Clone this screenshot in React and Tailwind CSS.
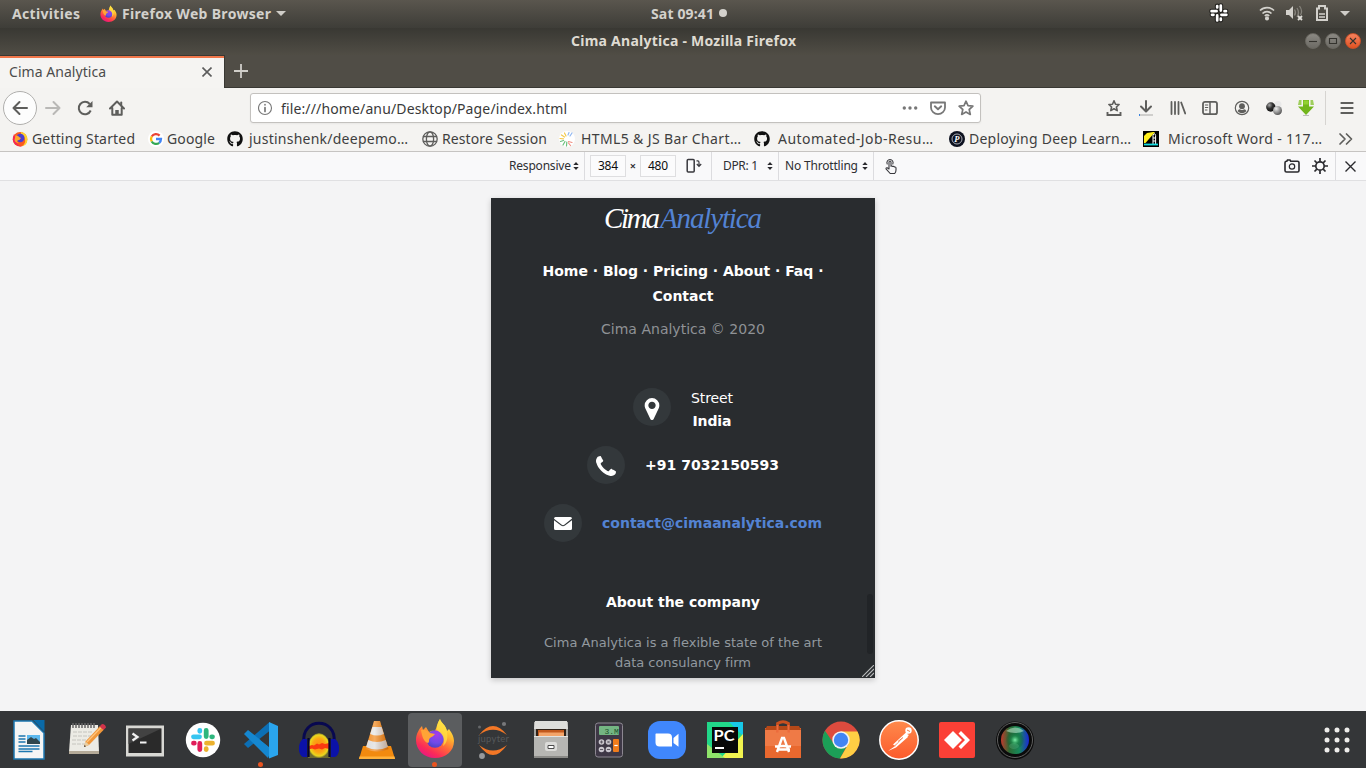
import { useLayoutEffect, useRef } from "react";
import { FaGithub } from "react-icons/fa";

/* Single line of text whose tracking is spread so it fills its box. */
function Fit({ className = "", children }) {
  const box = useRef(null);
  const run = useRef(null);
  useLayoutEffect(() => {
    const el = run.current;
    el.style.letterSpacing = "0px";
    const natural = el.getBoundingClientRect().width;
    const target = box.current.getBoundingClientRect().width;
    const n = Math.max(el.textContent.length - 1, 1);
    el.style.letterSpacing = (target - natural) / n + "px";
  }, [children]);
  return (
    <span ref={box} className={"block shrink-0 whitespace-nowrap " + className}>
      <span ref={run}>{children}</span>
    </span>
  );
}

function Firefox({ className, id }) {
  return (
    <svg className={className} viewBox="0 0 40 40">
      <defs>
        <linearGradient id={id + "a"} x1="0.8" y1="0.05" x2="0.25" y2="1">
          <stop offset="0" stopColor="#fff44f" />
          <stop offset="0.3" stopColor="#ffb82e" />
          <stop offset="0.55" stopColor="#ff6a38" />
          <stop offset="0.8" stopColor="#fb2b58" />
          <stop offset="1" stopColor="#e31587" />
        </linearGradient>
        <radialGradient id={id + "b"} cx="0.6" cy="0.25" r="0.8">
          <stop offset="0" stopColor="#a63bea" />
          <stop offset="0.6" stopColor="#6f4be8" />
          <stop offset="1" stopColor="#4b3fc0" />
        </radialGradient>
      </defs>
      <path fill={`url(#${id}a)`} d="M25 1c1 4 6 6 7 12l2-2c2 3 5 7 5 12 0 10-8 17-19 17C9 40 1 32 1 22 1 16 4 11 7 8l1 4 3-3 3 5c3-2 5-1 6-1 2-4 2-8 5-12z" />
      <circle cx="20" cy="21" r="8.8" fill={`url(#${id}b)`} />
      <path fill="#ffa436" d="M6 12c4-1 7 1 9 3l5 1c-1 2-4 3-5 4-2 2 0 4-2 5-4-1-6-6-7-13z" />
      <path fill="#ffdf43" opacity=".75" d="M25 1c1 4 6 6 7 13 1 6 0 11-4 14 2-6 1-11-5-15-2-2-1-7 2-12z" />
    </svg>
  );
}

/* Older, rounder globe-and-fox mark used by the bookmark. */
function FirefoxClassic() {
  return (
    <svg className="h-4 w-4" viewBox="0 0 16 16">
      <circle cx="8" cy="8.300" r="7.300" fill="#fb5a1e" />
      <path d="M1.300 5.500Q0 10 3 13q3 3 7 2.300-6-1-6-6.300L2 3z" fill="#f4245c" />
      <path d="M9 .8q7 1.700 6.400 8.700-.6 4.500-5.400 5.800 4-3 3-7-1-4-4-5z" fill="#ffd02e" />
      <circle cx="8.300" cy="7" r="4.200" fill="#4a3fd0" />
      <path d="M3.500 4.500q3-.5 3.500 1.500l2 1q-1 2-3.500 2.500-1.500 2 2 2-4 1.500-5-2.500z" fill="#ffa52c" />
    </svg>
  );
}

function Caret({ className = "" }) {
  return (
    <svg className={"h-[5px] w-[10px] " + className} viewBox="0 0 10 5">
      <path d="M0 0h10L5 5z" fill="#cfcdc8" />
    </svg>
  );
}

const SLACK_ARMS = [0, 90, 180, 270];

function TopPanel() {
  return (
    <div className="flex h-7 items-center bg-gradient-to-b from-[#5a564e] to-[#3e3d38] pl-3 text-[14px] leading-7 font-bold text-[#d3d1cc]">
      <Fit className="w-[68px]">Activities</Fit>
      <Firefox id="fp" className="-mt-0.5 ml-5 h-[17px] w-[17px]" />
      <Fit className="ml-[5px] w-[149px]">Firefox Web Browser</Fit>
      <Caret className="-mt-px ml-[5px]" />
      <Fit className="ml-[365px] w-[63px]">Sat 09:41</Fit>
      <span className="-mt-0.5 ml-[5px] h-2 w-2 rounded-full bg-[#d3d1cc]" />
      <svg className="-mt-0.5 ml-[482px] h-5 w-5" viewBox="0 0 20 20" fill="none" strokeLinecap="round">
        {[["#22211e", 4.8], ["#ffffff", 2.7]].map(([color, width]) => (
          <g key={color} stroke={color} strokeWidth={width}>
            {SLACK_ARMS.map((a) => (
              <path key={a} transform={`rotate(${a} 10 10)`} d="M2.600 8.200H7.600M8.200 3V4.500" />
            ))}
          </g>
        ))}
      </svg>
      <svg className="-mt-0.5 ml-[30px] h-4 w-4" viewBox="0 0 16 16" fill="none" stroke="#d3d1cc" strokeWidth="1.7">
        <path d="M1 5.500a10 10 0 0 1 14 0" />
        <path d="M3.500 8.500a6.400 6.400 0 0 1 9 0" />
        <path d="M5.800 11a3.200 3.200 0 0 1 4.400 0" />
        <circle cx="8" cy="13.400" r="1.200" fill="#d3d1cc" />
      </svg>
      <svg className="-mt-0.5 ml-[11px] h-4 w-[18px]" viewBox="0 0 18 16">
        <path d="M0 5h3l4-4v13l-4-4H0z" fill="#d3d1cc" />
        <path d="M8.500 4.500q2 3 0 6M11 3q3 4.500 0 9M13.500 1q3.500 5 1 9" fill="none" stroke="#85827b" strokeWidth="1.300" />
        <path d="M12 11l4 4M16 11l-4 4" stroke="#e0ded9" strokeWidth="1.800" />
      </svg>
      <svg className="-mt-0.5 ml-3 h-4 w-3" viewBox="0 0 12 16" fill="none" stroke="#d3d1cc">
        <path d="M1 3.500h2V1h6v2.500h2V15H1z" strokeWidth="2" />
        <path d="M3 9h6M3 12h6" strokeWidth="1.600" />
      </svg>
      <Caret className="-mt-px ml-3" />
    </div>
  );
}

function WindowButton({ close, children }) {
  return (
    <span className={"flex h-4 w-4 items-center justify-center rounded-full border " + (close ? "border-[#c8512a] bg-gradient-to-b from-[#f5815c] to-[#e0521f]" : "border-[#6a6861] bg-gradient-to-b from-[#8b8983] to-[#6c6a64]")}>
      <svg className="h-2.5 w-2.5 shrink-0" viewBox="0 0 10 10" fill="none" stroke="#34332e" strokeWidth="1.1">{children}</svg>
    </span>
  );
}

function TitleBar() {
  return (
    <div className="flex h-[27px] items-center bg-gradient-to-b from-[#393833] to-[#504d45] pb-0.5 pl-[571px]">
      <Fit className="w-[225px] text-[14px] leading-[24px] font-bold text-[#dfdbd2]">Cima Analytica - Mozilla Firefox</Fit>
      <div className="ml-[509px] flex gap-1">
        <WindowButton><path d="M1 5.500h8" /></WindowButton>
        <WindowButton><path d="M1.500 2.500h7v5h-7z" /></WindowButton>
        <WindowButton close><path d="M2 2l6 6M8 2L2 8" /></WindowButton>
      </div>
    </div>
  );
}

function TabStrip() {
  return (
    <div className="flex h-[33px] bg-[#504d46]">
      <div className="flex w-[225px] items-center border-t border-r border-[#393833] bg-[#f5f4f2]">
        <div className="flex h-full w-full items-center border-t-2 border-[#f0764a] pb-0.5 pl-[9px]">
          <Fit className="w-[97px] text-[14px] leading-[26px] text-[#4c4c4c]">Cima Analytica</Fit>
          <svg className="ml-24 h-2.5 w-2.5" viewBox="0 0 10 10" stroke="#5c5c5c" strokeWidth="1.6"><path d="M.5.5l9 9M9.500.5l-9 9" /></svg>
        </div>
      </div>
      <div className="flex flex-1 items-center border-b border-[#393833] pl-[9px]">
        <svg className="h-3.5 w-3.5" viewBox="0 0 14 14" stroke="#d0cec9" strokeWidth="1.8"><path d="M7 0v14M0 7h14" /></svg>
      </div>
    </div>
  );
}

function Ico({ className = "", children }) {
  return (
    <svg className={"h-4 w-4 shrink-0 " + className} viewBox="0 0 16 16" fill="none" stroke="#5e5e5c" strokeWidth="2" strokeLinecap="round" strokeLinejoin="round">
      {children}
    </svg>
  );
}

const STAR = "M8 1.200l2 4.500 4.900.5-3.700 3.300 1.100 4.900L8 11.900l-4.300 2.500 1.100-4.900L1.100 6.200l4.900-.5z";

function NavBar() {
  return (
    <div className="flex h-10 items-center pl-[3px]">
      <div className="flex h-[34px] w-[34px] items-center justify-center rounded-full border border-[#b0afad] bg-[#fdfdfd]">
        <Ico><path d="M15 8H1.500M7.500 2l-6 6 6 6" /></Ico>
      </div>
      <Ico className="ml-2"><path stroke="#b9b8b6" d="M1 8h13.500M8.500 2l6 6-6 6" /></Ico>
      <Ico className="ml-4"><path d="M13.700 10.500a6.200 6.200 0 1 1-1-6.500" strokeLinecap="butt" /><path d="M15.500 1V7.300H9.200z" fill="#5e5e5c" stroke="none" /></Ico>
      <Ico className="ml-4"><path d="M1 8.500l7-7 7 7M3.300 8v6.700h9.400V8" /><path d="M12.200 2.500v3" /><path d="M8 14v-4" strokeWidth="3.500" strokeLinecap="butt" /></Ico>
      <div className="ml-[125px] flex h-[30px] w-[731px] items-center rounded-[3px] border border-[#c3c1be] bg-white pl-[7px] shadow-xs">
        <Ico><circle cx="7" cy="8" r="6.500" strokeWidth="1.1" stroke="#777" /><path d="M7 7.500v4M7 4.700v.1" strokeWidth="1.700" stroke="#777" /></Ico>
        <Fit className="mt-0.5 ml-[7px] w-[286px] text-[14px] leading-[26px] text-[#3a3a3a]">file:///home/anu/Desktop/Page/index.html</Fit>
        <div className="ml-[335px] flex gap-3">
          <Ico><path d="M2.300 8v.01M8 8v.01M13.700 8v.01" strokeWidth="3.400" stroke="#777" /></Ico>
          <Ico><path d="M1 2.500h14v5a7 6.600 0 0 1-14 0z" stroke="#777" strokeWidth="1.800" /><path d="M4.800 6.300L8 9.300l3.200-3" stroke="#777" strokeWidth="1.900" /></Ico>
          <Ico><path d={STAR} stroke="#777" strokeWidth="1.700" /></Ico>
        </div>
      </div>
      <div className="ml-[125px] flex gap-4">
        <Ico><path d="M8 .8l1.500 3.400 3.600.3-2.700 2.500.8 3.600L8 8.700l-3.200 1.900.8-3.600L2.900 4.500l3.600-.3z" strokeWidth="1.600" /><path d="M1.500 12v3h13v-3" strokeWidth="1.900" strokeLinecap="butt" strokeLinejoin="miter" /></Ico>
        <Ico><path d="M8 1v10M3 6.500l5 5 5-5" /><path d="M1 15h14" stroke="#cfcecc" strokeLinecap="butt" /><path d="M1 15h1" stroke="#3b83dd" strokeLinecap="butt" /></Ico>
        <Ico><path d="M1.500 2v12M5 2v12M8.500 2v12M11.200 2.500l4 11" strokeWidth="1.800" /></Ico>
        <Ico><rect x="1" y="1.800" width="14" height="12.400" rx="2" strokeWidth="1.800" /><path d="M8 2v12" strokeWidth="1.500" /><path d="M3.300 5h2.500M3.300 7.500h2.500M3.300 10H5" strokeWidth="1" /></Ico>
        <Ico><circle cx="8" cy="8" r="6.700" strokeWidth="1.200" /><circle cx="8" cy="6.200" r="2.900" fill="#5e5e5c" stroke="none" /><path d="M3.600 11.300q.6-1.800 2.200-2 2.200 1.300 4.400 0 1.600.2 2.200 2-4.400 4-8.800 0z" fill="#5e5e5c" stroke="none" /></Ico>
        <svg className="h-4 w-4" viewBox="0 0 16 16">
          <defs>
            <radialGradient id="b1" cx=".35" cy=".3" r=".7"><stop offset="0" stopColor="#aaa" /><stop offset=".5" stopColor="#333" /><stop offset="1" stopColor="#111" /></radialGradient>
            <radialGradient id="b2" cx=".35" cy=".3" r=".8"><stop offset="0" stopColor="#eee" /><stop offset=".6" stopColor="#888" /><stop offset="1" stopColor="#444" /></radialGradient>
          </defs>
          <circle cx="12" cy="4.500" r="3.500" fill="#e9e9e9" />
          <circle cx="4.800" cy="7" r="4.700" fill="url(#b1)" />
          <circle cx="11.500" cy="10.500" r="4.500" fill="url(#b2)" />
        </svg>
        <svg className="h-4 w-4" viewBox="0 0 16 16">
          <path d="M5 0h6v6.500h5L8 15 0 6.500h5z" fill="#72b51b" />
          <path d="M1 0h2.500v5H0zM12.500 0H15l1 5h-3.500z" fill="#9fce5c" />
          <path d="M5.500.5h5v4h-5z" fill="#93d132" />
          <path d="M5 15.500h6" stroke="#bbb" />
        </svg>
      </div>
      <span className="ml-[11px] h-[34px] w-px bg-[#d6d4d1]" />
      <Ico className="ml-[13px]"><path d="M2.500 3h11M2.500 8h11M2.500 13h11" strokeLinecap="square" strokeWidth="1.800" /></Ico>
    </div>
  );
}

function Bookmark({ className, text, gap, icon, children }) {
  return (
    <div className={"flex shrink-0 items-center " + className}>
      <span className="flex h-4 w-4 shrink-0 items-center justify-center">{icon}</span>
      <Fit className={gap + " " + text}>{children}</Fit>
    </div>
  );
}

function GoogleIcon() {
  return (
    <svg className="h-4 w-4" viewBox="0 0 16 16" fill="none" strokeWidth="2.300">
      <circle cx="8" cy="8" r="8" fill="#fff" />
      <path d="M11.600 4.600A5 5 0 0 0 3.700 5.500" stroke="#ea4335" />
      <path d="M3.700 5.500a5 5 0 0 0 0 5" stroke="#fbbc05" />
      <path d="M3.700 10.500a5 5 0 0 0 7.500 1.300" stroke="#34a853" />
      <path d="M11.200 11.800A5 5 0 0 0 13 8H8" stroke="#4285f4" />
    </svg>
  );
}

function Bookmarks() {
  return (
    <div className="flex h-[23px] items-center pb-px pl-3 text-[14px] leading-[22px] text-[#3f3f3f]">
      <Bookmark className="w-[136px]" gap="ml-1" text="w-[103px]" icon={<FirefoxClassic />}>Getting Started</Bookmark>
      <Bookmark className="w-[79px]" gap="ml-[3px]" text="w-[48px]" icon={<GoogleIcon />}>Google</Bookmark>
      <Bookmark className="w-[195px]" gap="ml-1.5" text="w-[159px]" icon={<FaGithub className="h-4 w-4 text-[#111]" />}>justinshenk/deepemo…</Bookmark>
      <Bookmark className="w-[137px]" gap="ml-1" text="w-[105px]" icon={<Ico><g strokeWidth="1.300"><circle cx="8" cy="8" r="7.200" /><ellipse cx="8" cy="8" rx="3.600" ry="7.200" /><path d="M1.500 5.500h13M1.500 10.500h13" /></g></Ico>}>Restore Session</Bookmark>
      <Bookmark
        className="w-[195px]" gap="ml-1.5" text="w-[160px]"
        icon={
          <svg className="h-4 w-4" viewBox="0 0 16 16" fill="none" strokeWidth="1.200" strokeLinecap="round">
            <circle cx="8" cy="8" r="8" fill="#fff" />
            <path d="M1 7.500l3.500.3M2.500 4L5.500 6M5.500 2L7 5" stroke="#f3c94b" />
            <path d="M9 4l1-2.500M11 5l2-3" stroke="#8fb7f2" />
            <path d="M1.500 10.500L4.500 9.500M4 14l2-3.500M7.500 15l.3-4" stroke="#6cc07e" />
            <path d="M9.500 10.500l3.500 1M9.500 12l2 2.500" stroke="#f09184" />
          </svg>
        }
      >
        HTML5 &amp; JS Bar Chart…
      </Bookmark>
      <Bookmark className="w-[195px]" gap="ml-2" text="w-[155px]" icon={<FaGithub className="h-4 w-4 text-[#111]" />}>Automated-Job-Resu…</Bookmark>
      <Bookmark
        className="w-[194px]" gap="ml-1" text="w-[162px]"
        icon={
          <svg className="h-4 w-4" viewBox="0 0 16 16">
            <circle cx="8" cy="8" r="8" fill="#0d1220" />
            <circle cx="8" cy="8" r="5" fill="none" stroke="#b9bcc5" strokeWidth=".9" />
            <text x="5.300" y="11" fill="#fff" fontSize="8.500" fontWeight="700" fontStyle="italic" fontFamily="Liberation Serif, serif">P</text>
          </svg>
        }
      >
        Deploying Deep Learn…
      </Bookmark>
      <Bookmark
        className="w-[195px]" gap="ml-[9px]" text="w-[154px]"
        icon={
          <svg className="h-4 w-4" viewBox="0 0 16 16">
            <path d="M0 0h16v16H0z" fill="#000" />
            <path d="M1 12V5l3-3 6-1h2L2.500 12z" fill="#ffef1c" />
            <path d="M10 13V4.500q1.300-4 2.600 0V13M10 7h2.600M10 10h2.600" fill="none" stroke="#fff" />
            <path d="M1 13.500h14" stroke="#16dfe4" strokeWidth="1.800" />
          </svg>
        }
      >
        Microsoft Word - 117…
      </Bookmark>
      <Ico><path d="M2 3l5 5-5 5M8.500 3l5 5-5 5" strokeWidth="1.700" /></Ico>
    </div>
  );
}

function Sort({ className = "" }) {
  return (
    <svg className={"h-2 w-1.5 shrink-0 " + className} viewBox="0 0 6 8"><path d="M3 0l2.700 3H.3zM3 8l2.700-3H.3z" fill="#2a2a2e" /></svg>
  );
}

function Sep({ className = "" }) {
  return <span className={"h-full w-px shrink-0 bg-[#dcdcdf] " + className} />;
}

function DesignToolbar() {
  return (
    <div className="flex h-[30px] items-center border-t border-b border-t-[#c6c4c2] border-b-[#e0e0e2] bg-[#f9f9fa] pl-[509px] text-[12px] leading-[28px] text-[#2f2f33]">
      <Fit className="w-[62px]">Responsive</Fit>
      <Sort className="ml-0.5" />
      <Sep className="ml-[5px]" />
      <span className="ml-[5px] flex h-[22px] w-9 items-center justify-center border border-[#dedee0] bg-[#fbfbfc] text-[#0c0c0d]"><Fit className="w-5">384</Fit></span>
      <span className="w-3.5 text-center text-[11px] font-semibold">×</span>
      <span className="flex h-[22px] w-9 items-center justify-center border border-[#dedee0] bg-[#fbfbfc] text-[#0c0c0d]"><Fit className="w-5">480</Fit></span>
      <svg className="ml-2.5 h-4 w-4" viewBox="0 0 16 16" fill="none" stroke="#38383d" strokeWidth="1.500">
        <rect x="1.200" y="1.500" width="7" height="12.500" rx="1" />
        <path d="M10.500 2.800h1.300q1.200 0 1.200 1.500V8M10.800 6l2.200 2.300L15.200 6" strokeWidth="1.200" />
      </svg>
      <Sep className="ml-[9px]" />
      <Fit className="ml-[11px] w-[35px]">DPR: 1</Fit>
      <Sort className="ml-[9px]" />
      <Sep className="ml-[5px]" />
      <Fit className="ml-1.5 w-[73px]">No Throttling</Fit>
      <Sort className="ml-1" />
      <Sep className="ml-[5px]" />
      <svg className="ml-2.5 h-4 w-4" viewBox="0 0 16 16" fill="none" stroke="#38383d" strokeWidth="1.100" strokeLinejoin="round" strokeLinecap="round">
        <path d="M5 11V4.200q0-1.200 1-1.200t1 1.200V8.300q1-.6 1.800.2 1.200-.5 1.700.5 1.400-.3 1.500 1V12q0 2-1.300 3.500H6.200L2 10.800q0-1.200 1.200-1z" />
        <path d="M3.200 6A3.100 3.100 0 1 1 8.800 6" />
      </svg>
      <svg className="ml-96 h-4 w-4 shrink-0" viewBox="0 0 16 16" fill="none" stroke="#2a2a2e" strokeWidth="1.600">
        <path d="M2.500 3.200h.3l.7-1.200h2.500l.7 1.200h6.800q1.500 0 1.500 1.500v7.800q0 1.500-1.500 1.500h-11Q1 14 1 12.500V4.700q0-1.500 1.500-1.500z" />
        <circle cx="8" cy="8.500" r="2.700" strokeWidth="1.200" />
      </svg>
      <svg className="ml-3 h-4 w-4 shrink-0" viewBox="0 0 16 16" fill="none" stroke="#2a2a2e" strokeWidth="2">
        <circle cx="8" cy="8" r="4.200" strokeWidth="1.700" />
        <path d="M8 0v3.500M8 12.500V16M0 8h3.500M12.500 8H16M2.500 2.500l2.300 2.300M11.200 11.200l2.300 2.300M13.500 2.500l-2.300 2.300M4.800 11.200l-2.300 2.300" strokeWidth="1.700" />
      </svg>
      <Sep className="ml-[7px]" />
      <svg className="ml-[9px] h-[11px] w-[11px] shrink-0" viewBox="0 0 11 11" stroke="#2a2a2e" strokeWidth="1.400"><path d="M.5.5l10 10M10.500.5l-10 10" /></svg>
    </div>
  );
}

function Badge({ children }) {
  return <span className="flex h-[38px] w-[38px] shrink-0 items-center justify-center rounded-full bg-[#33383b]">{children}</span>;
}

function DevicePage() {
  return (
    <div className="relative flex h-[480px] w-[384px] flex-col overflow-hidden bg-[#292c2f] font-['DejaVu_Sans',sans-serif] text-[14px] text-white shadow-[0_2px_6px_rgba(0,0,0,0.2)]">
      <div className="ml-[113px] flex h-10 font-['Liberation_Serif',serif] text-[29px] leading-[40px] italic">
        <Fit className="w-14">Cima</Fit>
        <Fit className="w-[102px] text-[#5383d3]">Analytica</Fit>
      </div>
      <div className="mt-[21px] flex flex-col items-center leading-[25px] font-bold">
        <Fit className="w-[281px]">Home · Blog · Pricing · About · Faq ·</Fit>
        <Fit className="w-[61px]">Contact</Fit>
      </div>
      <Fit className="mx-auto -mt-px w-[164px] leading-[42px] text-[#8f9296]">Cima Analytica © 2020</Fit>
      <div className="mt-[38px] flex flex-col gap-5">
        <div className="flex h-[38px] items-start pl-[142px]">
          <Badge><svg className="mt-1 h-[22px] w-4" viewBox="0 0 1024 1536" fill="#fff"><path d="M768 512q0-106-75-181t-181-75-181 75-75 181 75 181 181 75 181-75 75-181zm256 0q0 109-33 179l-364 774q-16 33-47.500 52t-67.500 19-67.500-19-46.500-52l-365-774q-33-70-33-179 0-212 150-362t362-150 362 150 150 362z" /></svg></Badge>
          <div className="-mt-px ml-5 flex flex-col items-center leading-[23px]">
            <Fit className="w-[42px]">Street</Fit>
            <Fit className="w-[39px] font-bold">India</Fit>
          </div>
        </div>
        <div className="flex h-[38px] items-center pl-24">
          <Badge><svg className="mt-0.5 h-5 w-5" viewBox="0 0 1408 1408" fill="#fff"><path d="M1408 1112q0 27-10 70.500t-21 68.500q-21 50-122 106-94 51-186 51-27 0-53-3.500t-57.500-12.500-47-14.500-55.500-20.500-49-18q-98-35-175-83-127-79-264-216t-216-264q-48-77-83-175-3-9-18-49t-20.500-55.500-14.500-47-12.500-57.500-3.500-53q0-92 51-186 56-101 106-122 25-11 68.500-21t70.500-10q14 0 21 3 18 6 53 76 11 19 30 54t35 63.500 31 53.500q3 4 17.500 25t21.500 35.500 7 28.500q0 20-28.500 50t-62 55-62 53-28.500 46q0 9 5 22.500t8.500 20.500 14 24 11.500 19q76 137 174 235t235 174q2 1 19 11.500t24 14 20.500 8.500 22.500 5q18 0 46-28.500t53-62 55-62 50-28.500q14 0 28.500 7t35.500 21.500 25 17.500q25 15 53.500 31t63.500 35 54 30q70 35 76 53 3 7 3 21z" /></svg></Badge>
          <Fit className="ml-5 w-[134px] font-bold">+91 7032150593</Fit>
        </div>
        <div className="flex h-[38px] items-center pl-[53px]">
          <Badge><svg className="h-[13px] w-[18px]" viewBox="0 0 18 13" fill="#fff"><path d="M1.500 0h15Q18 0 18 1.500L10.500 7.600Q9 8.700 7.500 7.600L0 1.700Q0 0 1.500 0zM0 3.200l7 5.400q2 1.400 4 0l7-5.400v8.300q0 1.500-1.500 1.500h-15Q0 13 0 11.500z" /></svg></Badge>
          <Fit className="ml-5 w-[220px] font-bold text-[#5383d3]">contact@cimaanalytica.com</Fit>
        </div>
      </div>
      <Fit className="mx-auto mt-[50px] w-[154px] leading-5 font-bold">About the company</Fit>
      <div className="mt-[21px] flex flex-col items-center text-[13px] leading-5 text-[#92999f]">
        <Fit className="w-[278px]">Cima Analytica is a flexible state of the art</Fit>
        <Fit className="w-[136px]">data consulancy firm</Fit>
      </div>
      <span className="absolute top-[396px] right-[2px] h-[60px] w-1.5 rounded-full bg-[#212427]" />
      <svg className="absolute right-px bottom-px h-3 w-3" viewBox="0 0 12 12" stroke="#b9babb" strokeWidth="1.100"><path d="M0 12L12 0M4 12l8-8M8 12l4-4" /></svg>
    </div>
  );
}

const dockIcons = {
  writer: (
    <>
      <path d="M5 1h18l12 12v26H5z" fill="#f5f5f5" stroke="#1c77b0" strokeWidth="1.500" />
      <path d="M24 0h11.500v12z" fill="#0a6aa8" />
      <path d="M18 15h13v9H18z" fill="#5cb8ee" />
      <path d="M18 24v-4l4-3 3 2 2-1 4 4v2z" fill="#30474f" />
      <path d="M9.500 16h7M9.500 19h7M9.500 22h7M9.500 26h21M9.500 29h21M9.500 31.500h14" stroke="#1c77b0" strokeWidth="1.300" />
    </>
  ),
  notes: (
    <>
      <path d="M4 5h27l1 27H2z" fill="#ecebe5" />
      <path d="M2 31h30v3H2z" fill="#b4aa98" />
      <path d="M6 3v5M9 3v5M12 3v5M15 3v5M18 3v5M21 3v5M24 3v5M27 3v5" stroke="#666" strokeWidth="1.500" />
      <path d="M6 12h20M6 16h18M5 20h16M5 24h14" stroke="#c5c4be" strokeDasharray="4 1" />
      <path d="M17 27l1.500-5.500L33 6l4 3.500-15 15.500z" fill="#f0973a" />
      <path d="M20 22L34 7.500" stroke="#ffc47c" strokeWidth="1.200" />
      <path d="M32.500 6.500l2.500-2.500q3.500 0 4 3.500l-2.500 2.500z" fill="#d2334a" />
      <path d="M17 27l1.500-5.500 3.500 3.300z" fill="#e9cfa4" />
      <path d="M17 27l.6-2 1.400 1.200z" fill="#2b2b2b" />
    </>
  ),
  terminal: (
    <>
      <path d="M1 5.500h38v31H1z" fill="#d8d8d4" />
      <path d="M3.500 8.500h33v24.500h-33z" fill="#2a2a2a" />
      <path d="M3.500 8.500h33L3.500 24z" fill="#424242" />
      <path d="M7.500 13.500l5 3.500-5 3.500M15 22.500h6.500" fill="none" stroke="#f3f3f3" strokeWidth="2.200" />
    </>
  ),
  slack: (
    <>
      <circle cx="20" cy="20" r="17.200" fill="#fff" />
      <g fill="none" strokeWidth="4.800" strokeLinecap="round">
        <path d="M10.500 16.800h6M16.800 10.500v.8" stroke="#36c5f0" />
        <path d="M23.200 10.500v6M29.500 16.800h-.8" stroke="#2eb67d" />
        <path d="M23.500 23.200h6M23.200 29.500v-.8" stroke="#ecb22e" />
        <path d="M16.800 23.500v6M10.500 23.200h.8" stroke="#e01e5a" />
      </g>
    </>
  ),
  vscode: (
    <>
      <path d="M28 2.500L3 24l4 4 24-19z" fill="#0c6fb5" />
      <path d="M3 14l4-4 24 19-4 9z" fill="#1587d0" />
      <path d="M28 2l9 4v29l-9 3.500z" fill="#2aa5ee" />
      <path d="M28 13v14l-8.500-7z" fill="#343638" />
    </>
  ),
  audacity: (
    <>
      <defs>
        <radialGradient id="au"><stop offset="0" stopColor="#ff8a12" /><stop offset=".55" stopColor="#fba514" /><stop offset=".85" stopColor="#ead81e" /><stop offset="1" stopColor="#d8cf20" stopOpacity=".35" /></radialGradient>
      </defs>
      <path d="M9 38V24q3-10 11-11 8 1 11 11v14z" fill="url(#au)" />
      <path d="M10 26l3-1 2 .5 3-2 2 1 3-1.500 3 1 4-1v6l-4-1-3 1.500-3-1-4 1-3-1-3 1z" fill="#fb3a10" />
      <path d="M5 22C2-3 38-3 35 22" fill="none" stroke="#08084f" strokeWidth="3" />
      <path d="M8 19v18H4C-2 34-1 22 4 19zM32 19v18h4c6-3 5-15 0-18z" fill="#0b12a8" />
      <path d="M9.500 18v19M30.500 18v19" stroke="#05052e" strokeWidth="2.200" />
    </>
  ),
  vlc: (
    <>
      <defs><linearGradient id="vl"><stop offset="0" stopColor="#fff" stopOpacity=".1" /><stop offset=".4" stopColor="#fff" stopOpacity=".35" /><stop offset="1" stopColor="#7a3400" stopOpacity=".3" /></linearGradient></defs>
      <path d="M6 26h28l4 13H2z" fill="#f28a0f" />
      <path d="M2.500 36.500h35l.5 2.500H2z" fill="#ffb13b" />
      <path d="M17 1h6l8.500 28q-11.500 5-23 0z" fill="#f07f0a" />
      <path d="M15.400 7h9.200l2.200 7q-6.800 3-13.600 0z" fill="#e2e2e2" />
      <path d="M11.300 20q8.700 4 17.400 0l2.200 7q-10.900 5-21.800 0z" fill="#dadada" />
      <path d="M17 1h6l8.500 28q-11.500 5-23 0z" fill="url(#vl)" />
    </>
  ),
  jupyter: (
    <>
      <path d="M6 15Q20-3 34 15 20 4.500 6 15zM6 25q14 20 28 0-14 11-28 0z" fill="#f37726" />
      <circle cx="31" cy="4" r="2.100" fill="#77787a" />
      <circle cx="6.500" cy="7" r="1.500" fill="#656769" />
      <circle cx="9" cy="36" r="2.900" fill="#98999b" />
      <text x="5" y="22" textLength="31" fill="#55585b" fontSize="9.500" fontFamily="Lato, sans-serif">jupyter</text>
    </>
  ),
  files: (
    <>
      <path d="M3 2h34v36H3z" fill="#a5a5a2" />
      <path d="M4 1h32l1 8H3z" fill="#dededb" />
      <path d="M5 9h30v8H5z" fill="#302218" />
      <path d="M7 10h26v7H7z" fill="#c2591d" /><path d="M8 12.500h25v4H8z" fill="#f4a56a" />
      <path d="M3 16h34v22H3z" fill="#b6b6b3" />
      <path d="M3 16h34v1H3z" fill="#e4e4e1" />
      <path d="M3 36h34v2H3z" fill="#8a8a87" />
      <rect x="14" y="22" width="12" height="9" rx="2" fill="#dcdcda" />
      <path d="M17 25.500h6v3h-6z" fill="#fff" stroke="#4c4c4c" />
    </>
  ),
  calculator: (
    <>
      <rect x="6.500" y="3" width="27" height="34" rx="2.500" fill="#3e3846" stroke="#8c8791" strokeWidth="1" />
      <rect x="10" y="6" width="20" height="9" rx="1" fill="#74b583" />
      <text x="15.500" y="13.500" fill="#23552f" fontSize="8" fontFamily="Liberation Mono, monospace">3.M</text>
      <g fill="#c9c6cd"><circle cx="12.500" cy="22" r="2.800" /><circle cx="19.500" cy="22" r="2.800" /><circle cx="12.500" cy="29.500" r="2.800" /><circle cx="19.500" cy="29.500" r="2.800" /></g>
      <path d="M11 22h3M12.500 20.500v3M18.300 20.800l2.400 2.400M20.700 20.800l-2.400 2.400M11 29.500h3M18 29.500h3" stroke="#55505c" strokeWidth=".9" />
      <rect x="24" y="19" width="6" height="13" rx="1" fill="#f07c1c" /><path d="M25.300 25.500h3.400" stroke="#fff" strokeWidth="1.200" />
    </>
  ),
  zoom: (
    <>
      <rect x="1" y="1" width="38" height="38" rx="12" fill="#4087fc" />
      <path d="M9 13.500h12q4 0 4 4v9H12.500q-4 0-4-4V14zM26.500 18l5-4.200v13L26.500 23z" fill="#fff" />
    </>
  ),
  pycharm: (
    <>
      <path d="M2 2h36v36H2z" fill="#21d789" />
      <path d="M24 2h14v14z" fill="#17c8e8" /><path d="M38 14v24H16z" fill="#f1f34f" />
      <path d="M2 24v14h18z" fill="#8fe36a" />
      <path d="M7 7h26v26H7z" fill="#080808" />
      <text x="8.500" y="21" textLength="21" lengthAdjust="spacingAndGlyphs" fill="#fff" fontSize="15" fontWeight="700" fontFamily="Lato, sans-serif">PC</text>
      <path d="M10 28h9" stroke="#fff" strokeWidth="2" />
    </>
  ),
  software: (
    <>
      <path d="M14.500 12V3.500q5.500-3.500 11 0V12" fill="none" stroke="#c9501f" strokeWidth="2.800" />
      <path d="M2 8h36v30H2z" fill="#e9682e" />
      <path d="M4 6h32l2 4H2z" fill="#b54818" />
      <path d="M2 10h36v16H2z" fill="#ef7a46" />
      <path d="M14.500 5v6.500h-1.500M25.500 5v6.500h1.500" fill="none" stroke="#ec6b3c" strokeWidth="2" />
      <path d="M14 32l5-14h2l5 14M12 26.500q8-1 16 0M15 29.500h12" fill="none" stroke="#fff" strokeWidth="2.400" />
    </>
  ),
  chrome: (
    <>
      <circle cx="20" cy="20" r="18.500" fill="#dd4b3e" />
      <path d="M4 10.700A18.500 18.500 0 0 0 19 38.500l8-14.500-14 0z" fill="#1c9f57" />
      <path d="M20 11.500h16.500A18.500 18.500 0 0 1 19 38.500l8.300-14.300z" fill="#ffce44" />
      <circle cx="20" cy="20" r="8.700" fill="#f3f3f3" />
      <circle cx="20" cy="20" r="7.200" fill="#4285f4" />
    </>
  ),
  postman: (
    <>
      <defs><linearGradient id="pm" x2="0" y2="1"><stop offset="0" stopColor="#ff8a4c" /><stop offset="1" stopColor="#fb5a2c" /></linearGradient></defs>
      <circle cx="20" cy="20" r="19.200" fill="url(#pm)" stroke="#fff" strokeWidth="1.500" />
      <circle cx="29.500" cy="10.500" r="3.200" fill="#fff" />
      <path d="M27 12.500L14 24.500l1.500 1L29 13.500zM28 14l-12 12 2 .5L30 15zM15.500 26.500L9 31l8-3.500L29 17l-.5-1z" fill="#fff" />
      <path d="M28 10l3 1.500M19 21.500l5-4" stroke="#ee6d3a" strokeWidth=".9" />
    </>
  ),
  anydesk: (
    <>
      <rect x="2" y="2" width="36" height="36" rx="2" fill="#fb4036" />
      <path d="M16 11l9 9-9 9-9-9z" fill="#fff" /><path d="M21.500 13.500l2.500-2.500L33 20 24 29l-2.500-2.500L28 20z" fill="#fff" />
    </>
  ),
  lens: (
    <>
      <defs>
        <linearGradient id="ln"><stop offset="0" stopColor="#c03a2c" /><stop offset=".3" stopColor="#2b6b34" /><stop offset=".65" stopColor="#17895a" /><stop offset="1" stopColor="#1c27d8" /></linearGradient>
        <radialGradient id="lc"><stop offset="0" stopColor="#7cf0a8" /><stop offset=".45" stopColor="#1f8a4c" stopOpacity=".75" /><stop offset="1" stopColor="#0c4a2c" stopOpacity=".1" /></radialGradient>
      </defs>
      <circle cx="20" cy="20.500" r="19" fill="#0b0b0b" />
      <circle cx="20" cy="20" r="17.500" fill="none" stroke="#6a6a6a" strokeWidth=".9" />
      <circle cx="20" cy="20" r="14" fill="url(#ln)" />
      <circle cx="20" cy="20" r="9" fill="url(#lc)" />
      <path d="M11 11q9-7 18 0-9 4-18 0z" fill="#d4f5e0" opacity=".5" />
      <ellipse cx="19" cy="26" rx="5" ry="3" fill="#8cf2b4" opacity=".2" />
    </>
  ),
};

const dockOrder = ["writer", "notes", "terminal", "slack", "vscode", "audacity", "vlc", "firefox", "jupyter", "files", "calculator", "zoom", "pycharm", "software", "chrome", "postman", "anydesk", "lens"];

function Dock() {
  return (
    <div className="flex h-[57px] bg-[#343638]">
      {dockOrder.map((name) => (
        <div key={name} className="relative flex w-[58px] items-center justify-center">
          <div className={"flex h-[54px] w-[54px] items-center justify-center rounded-[4px] " + (name === "firefox" ? "bg-[#5b5d5f]" : "")}>
            {name === "firefox" ? <Firefox id="fd" className="-mt-1 h-10 w-10" /> : <svg className="h-10 w-10" viewBox="0 0 40 40">{dockIcons[name]}</svg>}
          </div>
          {(name === "firefox" || name === "vscode") && <span className="absolute bottom-px left-[26px] h-[5px] w-[5px] rounded-full bg-[#e95420]" />}
        </div>
      ))}
      <div className="ml-auto flex w-[58px] items-center justify-center">
        <svg className="h-[26px] w-[26px]" viewBox="0 0 26 26" fill="#eeedeb">
          {[3, 13, 23].map((y) => [3, 13, 23].map((x) => <circle key={x + "-" + y} cx={x} cy={y} r="2.500" />))}
        </svg>
      </div>
    </div>
  );
}

export default function App() {
  return (
    <div className="flex h-[768px] w-[1366px] flex-col overflow-hidden bg-[#f4f4f4] font-['Noto_Sans',sans-serif]">
      <TopPanel />
      <TitleBar />
      <TabStrip />
      <div className="bg-[#f4f3f1]">
        <NavBar />
        <Bookmarks />
      </div>
      <DesignToolbar />
      <div className="flex flex-1 justify-center bg-[#f4f4f5] pt-[17px]">
        <DevicePage />
      </div>
      <Dock />
    </div>
  );
}
